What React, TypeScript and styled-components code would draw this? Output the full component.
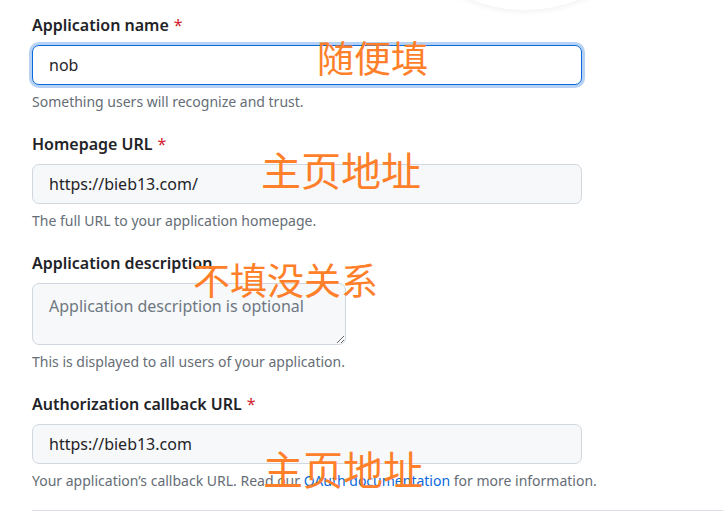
import React from 'react';
import styled, { createGlobalStyle } from 'styled-components';

const GlobalStyle = createGlobalStyle`
  body {
    margin: 0;
    background: #ffffff;
    font-family: "Segoe UI", "Noto Sans", "Liberation Sans", sans-serif;
    color: #1f2328;
  }
`;

interface FieldProps {
  label: string;
  required?: boolean;
  hint: React.ReactNode;
  children: React.ReactNode;
}

function Field({ label, required, hint, children }: FieldProps) {
  return (
    <Group>
      <Label>
        {label}
        {required && <Star>*</Star>}
      </Label>
      {children}
      <Hint>{hint}</Hint>
    </Group>
  );
}

export default function App() {
  return (
    <>
      <GlobalStyle />
      <Page>
        <Avatar />
        <Form>
          <Field label="Application name" required hint="Something users will recognize and trust.">
            <Input $focused defaultValue="nob" />
          </Field>
          <Field label="Homepage URL" required hint="The full URL to your application homepage.">
            <Input defaultValue="https://bieb13.com/" />
          </Field>
          <Field label="Application description" hint="This is displayed to all users of your application.">
            <TextArea placeholder="Application description is optional" />
          </Field>
          <Field
            label="Authorization callback URL"
            required
            hint={
              <>
                Your application’s callback URL. Read our <Link>OAuth documentation</Link> for more information.
              </>
            }
          >
            <Input defaultValue="https://bieb13.com" />
          </Field>
          <Divider />
        </Form>
        <Note style={{ left: 317, top: 37 }}>随便填</Note>
        <Note style={{ left: 261, top: 147 }} $big>主页地址</Note>
        <Note style={{ left: 193, top: 259 }}>不填没关系</Note>
        <Note style={{ left: 263, top: 446 }} $big>主页地址</Note>
      </Page>
    </>
  );
}

const Page = styled.div`
  position: relative;
  width: 723px;
  height: 512px;
  overflow: hidden;
  background: #fff;
`;

const Avatar = styled.div`
  position: absolute;
  left: 380px;
  top: -280px;
  width: 290px;
  height: 290px;
  border-radius: 50%;
  background: #fff;
  box-shadow: 0 1px 6px rgba(31, 35, 40, 0.08);
`;

const Form = styled.div`
  display: flex;
  flex-direction: column;
  padding: 13px 0 0 32px;
  gap: 20px;
`;

const Group = styled.div`
  display: flex;
  flex-direction: column;
  align-items: flex-start;
`;

const Label = styled.div`
  font-size: 16px;
  line-height: 24px;
  font-weight: 600;
  color: #1f2328;
  margin-bottom: 8px;
`;

const Star = styled.span`
  color: #cf222e;
  margin-left: 5px;
  font-weight: 400;
`;

const Input = styled.input<{ $focused?: boolean }>`
  box-sizing: border-box;
  width: 550px;
  height: 40px;
  padding: 0 16px;
  font-family: inherit;
  font-size: 16px;
  color: #1f2328;
  border-radius: 7px;
  border: 1px solid ${(p) => (p.$focused ? '#0969da' : '#d0d7de')};
  background: ${(p) => (p.$focused ? '#ffffff' : '#f6f8fa')};
  box-shadow: ${(p) => (p.$focused ? '0 0 0 3px rgba(9, 105, 218, 0.3)' : 'none')};
  outline: none;
`;

const TextArea = styled.textarea`
  display: block;
  box-sizing: border-box;
  width: 314px;
  height: 62px;
  padding: 10px 16px;
  font-family: inherit;
  font-size: 16px;
  line-height: 24px;
  color: #1f2328;
  border-radius: 7px;
  border: 1px solid #d0d7de;
  background: #f6f8fa;
  outline: none;
  &::placeholder {
    color: #6e7781;
  }
`;

const Hint = styled.div`
  margin-top: 7px;
  font-size: 14px;
  line-height: 20px;
  color: #656d76;
`;

const Link = styled.span`
  color: #0969da;
`;

const Divider = styled.div`
  width: 691px;
  height: 1px;
  background: #d8dee4;
  margin-top: -1px;
`;

const Note = styled.div<{ $big?: boolean }>`
  position: absolute;
  font-family: "Noto Sans CJK SC", sans-serif;
  font-size: ${(p) => (p.$big ? '40px' : '37px')};
  line-height: 1.1;
  color: #ff7f2a;
  white-space: nowrap;
  pointer-events: none;
`;
